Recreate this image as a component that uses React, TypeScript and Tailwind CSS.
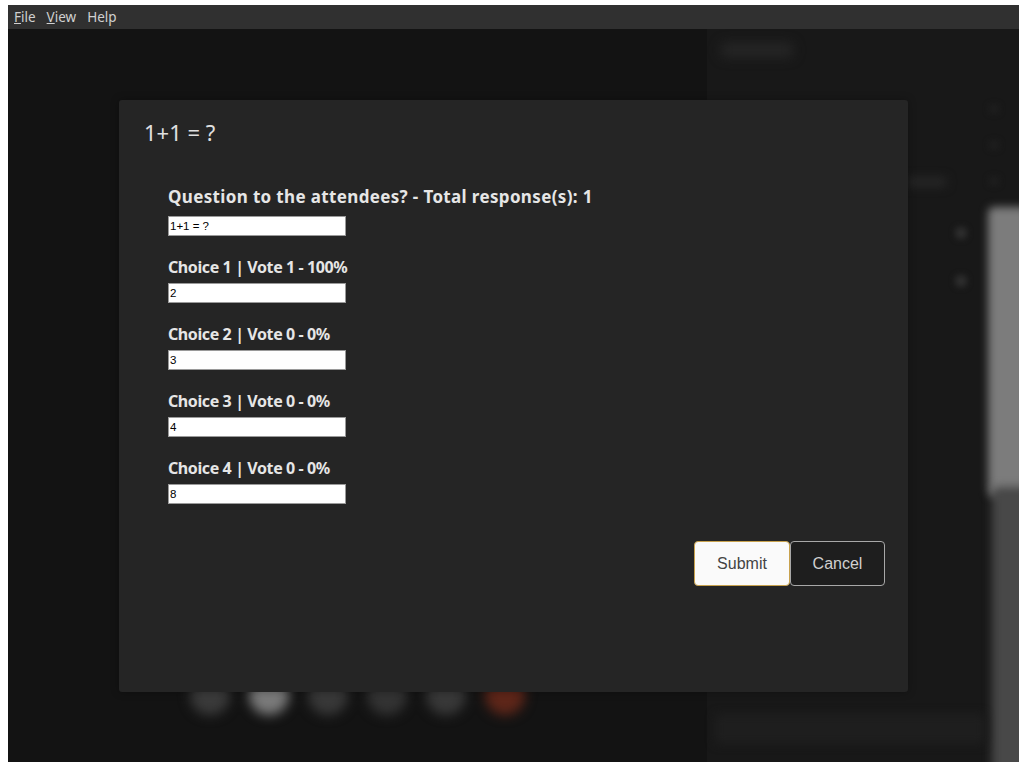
import React from "react";

const ubuntu = { fontFamily: '"Noto Sans", "Open Sans", sans-serif' };

function Field({ label, value, big }: { label: string; value: string; big?: boolean }) {
  return (
    <div className={big ? "flex flex-col" : "flex flex-col pt-[3px]"}>
      <div
        className={
          big
            ? "text-[17px] font-bold leading-[22px] tracking-[0.35px] text-[#e6e6e6]"
            : "text-[16px] font-bold leading-[22px] tracking-[-0.4px] text-[#e6e6e6]"
        }
        style={ubuntu}
      >
        {label}
      </div>
      <input
        readOnly
        value={value}
        className={
          (big ? "mt-[8px] " : "mt-[5px] ") +
          "h-[20px] w-[178px] border border-[#9a9a9a] bg-white px-[1px] text-[11.5px] text-black outline-none"
        }
        style={{ fontFamily: '"Liberation Sans", Arial, sans-serif' }}
      />
    </div>
  );
}

export default function App() {
  return (
    <div className="h-[771px] w-[1024px] bg-white pl-[8px] pt-[5px]">
      <div className="relative flex h-[757px] w-[1011px] flex-col overflow-hidden">
        <div
          className="flex h-[24px] items-center gap-[11px] bg-[#303030] pl-[6px] text-[13.5px] text-[#d0d0d0]"
          style={ubuntu}
        >
          <span>
            <span className="underline">F</span>ile
          </span>
          <span>
            <span className="underline">V</span>iew
          </span>
          <span>Help</span>
        </div>
        <div className="relative flex flex-1">
          <div className="relative flex-1 bg-[#131313]">
            <div className="absolute left-[182px] top-[646px] flex gap-[19px] blur-[6px]">
              <div className="h-[40px] w-[40px] rounded-full bg-[#3a3a3a]" />
              <div className="h-[40px] w-[40px] rounded-full bg-[#7a7a7a]" />
              <div className="h-[40px] w-[40px] rounded-full bg-[#383838]" />
              <div className="h-[40px] w-[40px] rounded-full bg-[#333]" />
              <div className="h-[40px] w-[40px] rounded-full bg-[#383838]" />
              <div className="h-[40px] w-[40px] rounded-full bg-[#5e2619]" />
            </div>
          </div>
          <div className="relative w-[312px] bg-[#181818]">
            <div className="absolute left-[14px] top-[14px] h-[14px] w-[72px] rounded bg-[#262626] blur-[6px]" />
            <div className="absolute left-[200px] top-[148px] h-[10px] w-[40px] rounded bg-[#262626] blur-[5px]" />
            <div className="absolute left-[248px] top-[198px] h-[12px] w-[12px] rounded-full bg-[#303030] blur-[3px]" />
            <div className="absolute left-[248px] top-[246px] h-[12px] w-[12px] rounded-full bg-[#303030] blur-[3px]" />
            <div className="absolute left-[282px] top-[76px] h-[8px] w-[10px] rounded bg-[#202020] blur-[3px]" />
            <div className="absolute left-[282px] top-[112px] h-[8px] w-[10px] rounded bg-[#202020] blur-[3px]" />
            <div className="absolute left-[282px] top-[148px] h-[8px] w-[10px] rounded bg-[#202020] blur-[3px]" />
            <div className="absolute left-[281px] top-[178px] h-[290px] w-[40px] rounded-[6px] bg-[#7c7c7c] blur-[4px]" />
            <div className="absolute left-[285px] top-[458px] h-[290px] w-[40px] rounded-[6px] bg-[#484848] blur-[5px]" />
            <div className="absolute left-[8px] top-[685px] h-[30px] w-[270px] rounded bg-[#1e1e1e] blur-[5px]" />
          </div>

          <div className="absolute left-[111px] top-[71px] flex h-[592px] w-[789px] flex-col rounded-[3px] bg-[#252525] shadow-[0_0_8px_rgba(0,0,0,0.3)]">
            <div className="pl-[25px] pt-[18px] text-[22px] leading-[28px] text-[#e0e0e0]" style={ubuntu}>
              1+1 = ?
            </div>
            <div className="mt-[40px] flex flex-col gap-[17px] pl-[49px]">
              <Field big label="Question to the attendees? - Total response(s): 1" value="1+1 = ?" />
              <Field label="Choice 1 | Vote 1 - 100%" value="2" />
              <Field label="Choice 2 | Vote 0 - 0%" value="3" />
              <Field label="Choice 3 | Vote 0 - 0%" value="4" />
              <Field label="Choice 4 | Vote 0 - 0%" value="8" />
            </div>
            <div
              className="mt-[37px] flex justify-end pr-[23px] text-[16px]"
              style={{ fontFamily: '"Liberation Sans", Arial, sans-serif' }}
            >
              <button className="h-[45px] w-[96px] rounded-[4px] border border-[#c8a24e] bg-[#fafafa] text-[#444]">
                Submit
              </button>
              <button className="h-[45px] w-[95px] rounded-[4px] border border-[#a8a8a8] bg-[#1e1e1e] text-[#d0d0d0]">
                Cancel
              </button>
            </div>
          </div>
        </div>
      </div>
    </div>
  );
}
